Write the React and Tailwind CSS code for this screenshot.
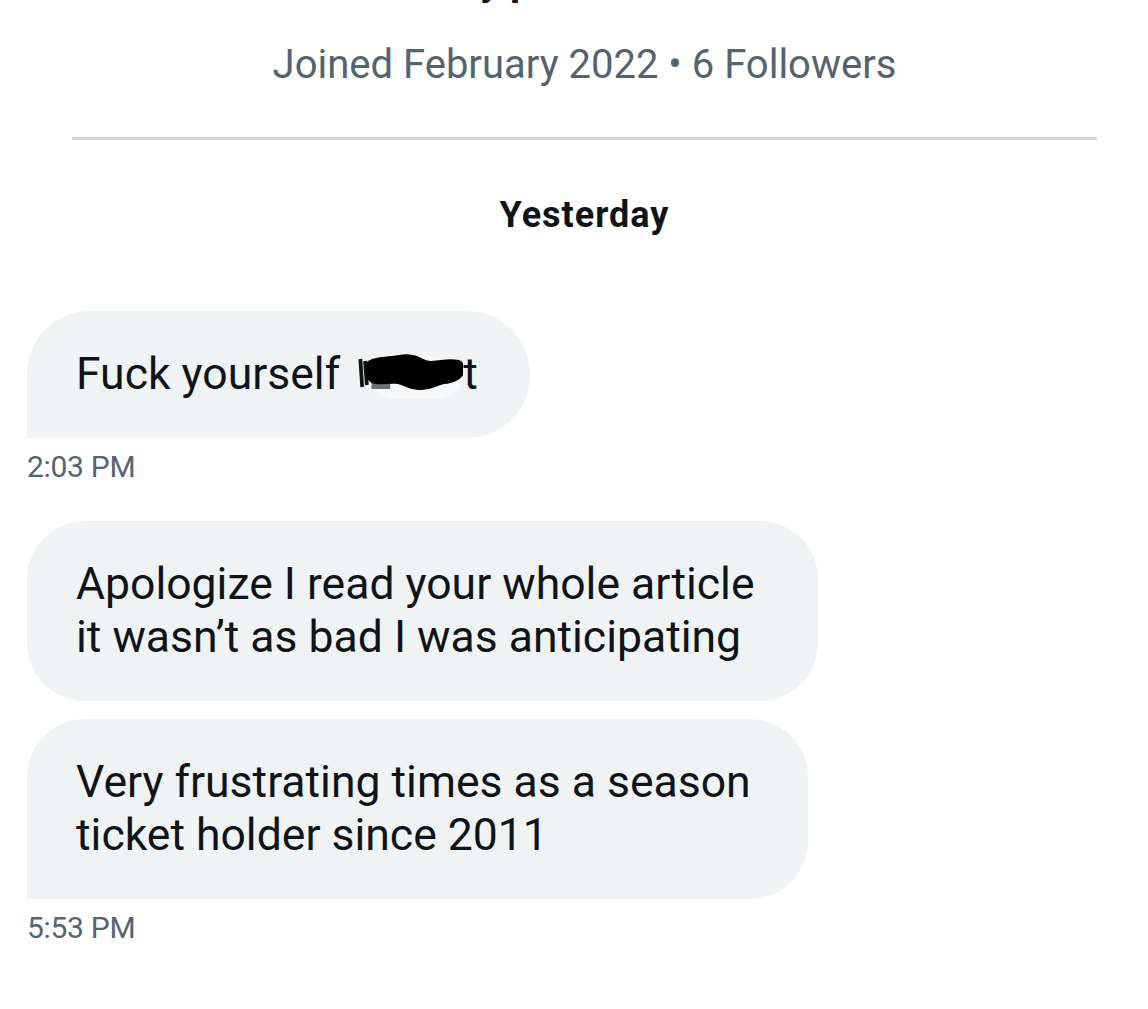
export default function App() {
  return (
    <div className="w-[1148px] h-[1009px] overflow-hidden bg-white text-[#0f1419] font-['Roboto',_'Noto_Sans',_sans-serif]">
      <div className="h-[5px] overflow-hidden">
        <div className="-mt-[42px] pl-[480px] text-[40px] leading-[48px] font-bold">y p</div>
      </div>

      <div className="pl-[72px] pr-[51px]">
        <p className="mt-[36px] text-center text-[40px] leading-[48px] text-[#536471]">
          Joined February 2022 • 6 Followers
        </p>
        <div className="mt-[48px] h-[3px] bg-[#cfd9de]" />
        <p className="mt-[53px] text-center text-[36px] leading-[44px] font-bold tracking-[1px]">Yesterday</p>
      </div>

      <div className="mt-[74px] pl-[27px] flex flex-col items-start">
        <Bubble className="rounded-[63px] rounded-bl-none">
          Fuck yourself <Redacted />t
        </Bubble>
        <Time>2:03 PM</Time>

        <div className="mt-[36px]" />
        <Bubble className="rounded-[58px] w-[791px]">
          Apologize I read your whole article
          <br />
          it wasn’t as bad I was anticipating
        </Bubble>
        <div className="mt-[18px]" />
        <Bubble className="rounded-[58px] rounded-bl-none w-[781px]">
          Very frustrating times as a season
          <br />
          ticket holder since 2011
        </Bubble>
        <Time>5:53 PM</Time>
      </div>
    </div>
  );
}

function Bubble({ className, children }) {
  return (
    <div className={"bg-[#eff3f4] pl-[49px] pr-[52px] py-[37px] text-[44.5px] leading-[53px] " + className}>
      {children}
    </div>
  );
}

function Time({ children }) {
  return <p className="mt-[11px] text-[30px] leading-[36px] tracking-[-0.3px] text-[#536471]">{children}</p>;
}

function Redacted() {
  return (
    <svg viewBox="0 0 120 46" preserveAspectRatio="none" className="inline-block w-[112px] h-[46px] align-[-10px]">
      <ellipse cx="70" cy="26" rx="50" ry="24" fill="#f6f8f9" />
      <rect x="22" y="26" width="20" height="10" fill="#6b6f72" />
      <path d="M10 6 L12 34 M15 8 L17 32" stroke="#111" strokeWidth="4" fill="none" />
      <path
        d="M17 9 C24 4 34 4 44 3 C52 2 58 0 66 2 C74 3 78 8 86 8 C96 7 106 5 116 7 C121 9 123 14 121 20 C118 27 110 30 100 31 C92 33 84 37 74 37 C64 37 58 33 50 31 C42 30 34 32 26 31 C20 30 16 26 16 18 Z"
        fill="#000"
      />
    </svg>
  );
}
